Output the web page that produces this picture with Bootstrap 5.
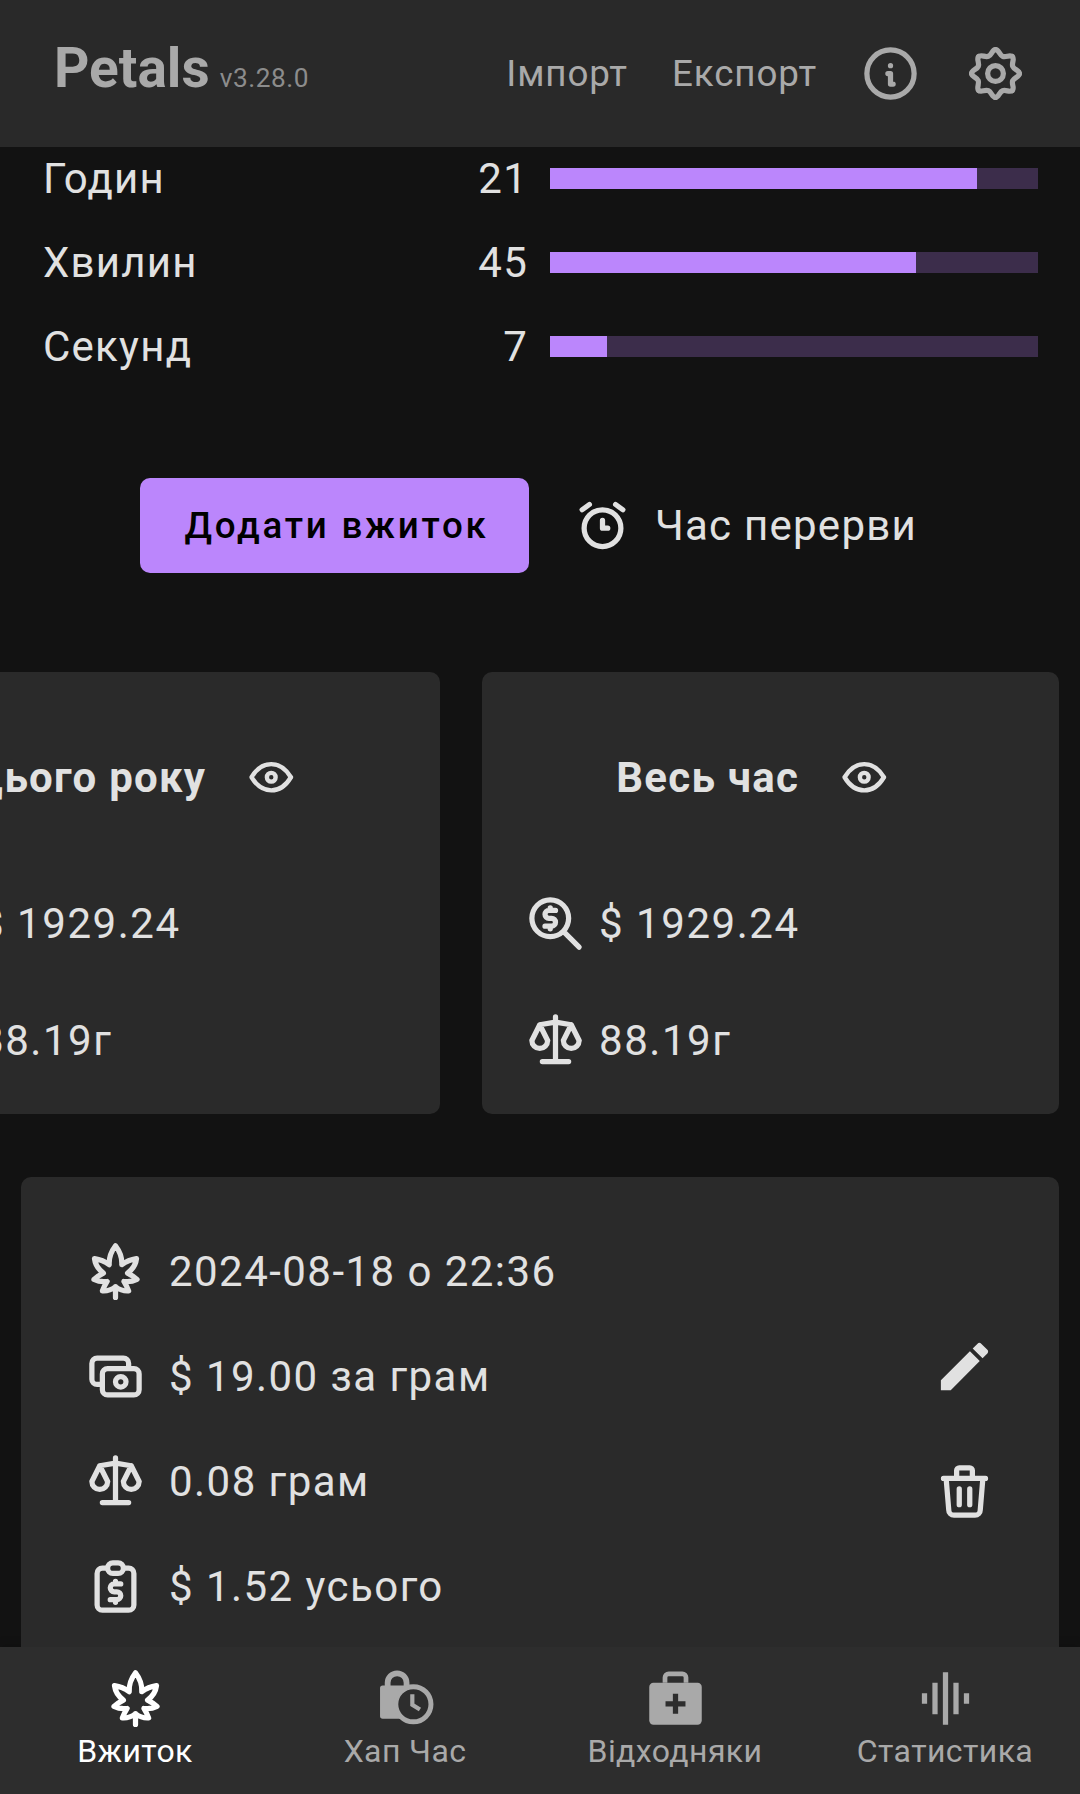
<!DOCTYPE html>
<html lang="uk">
<head>
<meta charset="utf-8">
<title>Petals</title>
<link href="https://cdn.jsdelivr.net/npm/bootstrap@5.3.0/dist/css/bootstrap.min.css" rel="stylesheet">
<style>
html,body{height:1794px;margin:0;background:#121212;}
body{font-family:Roboto,"Liberation Sans",sans-serif;color:#e1e1e1;overflow:hidden;}
.ico{width:63px;height:63px;flex:none;fill:none;stroke:currentColor;stroke-width:2;stroke-linecap:round;stroke-linejoin:round;}
.ico-eye{width:52.5px;height:52.5px;}
.topbar{height:147px;background:#292929;padding:0 53px 0 54px;color:#a9a9a9;flex:none;align-items:flex-start;flex-wrap:nowrap;}
.brand{font-size:55px;font-weight:700;line-height:1;margin-top:41px;color:#a9a9a9;padding:0;}
.brand-ver{font-size:26.25px;font-weight:400;letter-spacing:.55px;color:#8c8c8c;margin-left:10px;}
.toplink{font-size:36.75px;letter-spacing:.9px;color:#a9a9a9;line-height:44px;text-decoration:none;}
.toplink + .toplink{margin-left:44px;}
.topright{margin-top:42px;}
.info-ico{margin-left:42px;margin-right:42px;}
.pagebody{flex:1 1 0;min-height:0;overflow:hidden;}
.timer{margin-top:-10.5px;}
.trow{height:84px;padding:0 42px 0 43px;font-size:42px;letter-spacing:1.25px;}
.tnum{margin-left:auto;margin-right:22px;}
.tbar{width:488px;height:21px;border-radius:0;background:#3c2d4b;}
.tfill{background:#bb86fc;}
.actions{margin-top:89.5px;height:95px;}
.addbtn{width:389px;height:95px;border:0;border-radius:10px;background:#bb86fc;color:#000;font-size:36.75px;font-weight:500;letter-spacing:2.75px;padding:0 0 0 4px;}
.addbtn:hover{background:#bb86fc;color:#000;}
.breakbtn{border:0;color:#e1e1e1;font-size:42px;letter-spacing:1.25px;padding:0;margin-left:42px;margin-right:23px;gap:21px;}
.statwrap{margin:99px 0 0 -137px;gap:42px;}
.statcard{width:577px;height:442px;flex:none;background:#2a2a2a;border:0;border-radius:10px;color:#e1e1e1;}
.stathead{height:52.5px;margin-top:79px;padding-right:34px;font-size:42px;font-weight:700;letter-spacing:1.25px;gap:39px;white-space:nowrap;}
.statrow{height:116.5px;padding-left:42px;font-size:42px;letter-spacing:1.55px;gap:12px;}
.stathead + .statrow{margin-top:62px;}
.logcard{margin:63px 21px 0;background:#2a2a2a;border:0;border-radius:10px;padding:41.5px 63px;}
.logrow{height:105px;gap:22px;font-size:42px;letter-spacing:1.45px;color:#e1e1e1;}
.logacts{gap:62px;}
.bottombar{height:147px;background:#2d2d2d;flex:none;box-shadow:0 -4px 8px rgba(0,0,0,.1);}
.tabitem{color:#a9a9a9;font-size:32px;letter-spacing:.4px;line-height:37px;padding-top:20px;text-decoration:none;}
.tabitem span{margin-top:3px;}
.tabitem.on{color:#fff;}
.ico-solid{fill:currentColor;stroke:none;}
</style>
</head>
<body>
<svg width="0" height="0" class="d-block position-absolute">
  <defs>
    <symbol id="i-scale" viewBox="0 0 24 24"><path d="M7 20l10 0M6 6l6 -1l6 1M12 3l0 17M9 12l-3 -6l-3 6a3 3 0 0 0 6 0M21 12l-3 -6l-3 6a3 3 0 0 0 6 0"/></symbol>
    <symbol id="i-eye" viewBox="0 0 24 24"><path d="M10 12a2 2 0 1 0 4 0a2 2 0 0 0 -4 0M21 12c-2.4 4 -5.4 6 -9 6c-3.6 0 -6.6 -2 -9 -6c2.4 -4 5.4 -6 9 -6c3.6 0 6.6 2 9 6"/></symbol>
    <symbol id="i-zoom" viewBox="0 0 24 24"><path d="M3 10a7 7 0 1 0 14 0a7 7 0 1 0 -14 0M21 21l-6 -6M12 7h-2.5a1.5 1.5 0 0 0 0 3h1a1.5 1.5 0 0 1 0 3h-2.5M10 13v1m0 -8v1"/></symbol>
    <symbol id="i-leaf" viewBox="0 0 24 24"><path d="M12 21.9V17.8M12 2.2Q14.6 5.6 14.4 9.4Q16.8 7.6 20 7.1Q19.6 10.4 16.6 12.6Q18.6 13.6 20.2 15Q17.8 16.2 15.2 15.8Q16.2 17.4 17 19.4Q14.4 19.6 12 17.8Q9.6 19.6 7 19.4Q7.8 17.4 8.8 15.8Q6.2 16.2 3.8 15Q5.4 13.6 7.4 12.6Q4.4 10.4 4 7.1Q7.2 7.6 9.6 9.4Q9.4 5.6 12 2.2Z"/></symbol>
    <path id="gearseg" d="M12 2.9C13.3 2.9 13.5 4.9 14.72 5.44C16 6 17.5 4.65 18.43 5.57"/>
  </defs>
</svg>

<div class="d-flex flex-column vh-100 overflow-hidden">
  <header class="navbar topbar d-flex justify-content-between">
    <a class="navbar-brand brand" href="#">Petals<span class="brand-ver">v3.28.0</span></a>
    <div class="d-flex align-items-center topright">
      <a class="toplink" href="#">Імпорт</a>
      <a class="toplink" href="#">Експорт</a>
      <svg class="ico info-ico" viewBox="0 0 24 24"><path d="M3 12a9 9 0 1 0 18 0a9 9 0 0 0 -18 0M12 9h.01M11 12h1v4h1"/></svg>
      <svg class="ico" viewBox="0 0 24 24">
        <use href="#gearseg"/><use href="#gearseg" transform="rotate(45 12 12)"/><use href="#gearseg" transform="rotate(90 12 12)"/><use href="#gearseg" transform="rotate(135 12 12)"/><use href="#gearseg" transform="rotate(180 12 12)"/><use href="#gearseg" transform="rotate(225 12 12)"/><use href="#gearseg" transform="rotate(270 12 12)"/><use href="#gearseg" transform="rotate(315 12 12)"/>
        <circle cx="12" cy="12" r="3"/>
      </svg>
    </div>
  </header>

  <main class="pagebody">
    <section class="timer">
      <div class="trow d-flex align-items-center"><span>Годин</span><span class="tnum">21</span><div class="progress tbar"><div class="progress-bar tfill" style="width:87.5%"></div></div></div>
      <div class="trow d-flex align-items-center"><span>Хвилин</span><span class="tnum">45</span><div class="progress tbar"><div class="progress-bar tfill" style="width:75%"></div></div></div>
      <div class="trow d-flex align-items-center"><span>Секунд</span><span class="tnum">7</span><div class="progress tbar"><div class="progress-bar tfill" style="width:11.67%"></div></div></div>
    </section>

    <section class="actions d-flex justify-content-center align-items-center">
      <button class="btn addbtn" type="button">Додати вжиток</button>
      <button class="btn breakbtn d-flex align-items-center" type="button">
        <svg class="ico" viewBox="0 0 24 24"><path d="M5 13a7 7 0 1 0 14 0a7 7 0 1 0 -14 0M12 10l0 3l2 0M7 4l-2.75 2M17 4l2.75 2"/></svg>
        Час перерви
      </button>
    </section>

    <section class="statwrap d-flex">
      <div class="card statcard">
        <div class="stathead d-flex align-items-center justify-content-center"><span>Цього року</span><svg class="ico ico-eye"><use href="#i-eye"/></svg></div>
        <div class="statrow d-flex align-items-center"><svg class="ico"><use href="#i-zoom"/></svg><span>$ 1929.24</span></div>
        <div class="statrow d-flex align-items-center"><svg class="ico"><use href="#i-scale"/></svg><span>88.19г</span></div>
      </div>
      <div class="card statcard">
        <div class="stathead d-flex align-items-center justify-content-center"><span>Весь час</span><svg class="ico ico-eye"><use href="#i-eye"/></svg></div>
        <div class="statrow d-flex align-items-center"><svg class="ico"><use href="#i-zoom"/></svg><span>$ 1929.24</span></div>
        <div class="statrow d-flex align-items-center"><svg class="ico"><use href="#i-scale"/></svg><span>88.19г</span></div>
      </div>
    </section>

    <section class="card logcard d-flex flex-row justify-content-between align-items-center">
      <div>
        <div class="logrow d-flex align-items-center"><svg class="ico"><use href="#i-leaf"/></svg><span>2024-08-18 о 22:36</span></div>
        <div class="logrow d-flex align-items-center"><svg class="ico" viewBox="0 0 24 24"><path d="M7 11a2 2 0 0 1 2 -2h10a2 2 0 0 1 2 2v6a2 2 0 0 1 -2 2h-10a2 2 0 0 1 -2 -2zM12 14a2 2 0 1 0 4 0a2 2 0 1 0 -4 0M17 9v-2a2 2 0 0 0 -2 -2h-10a2 2 0 0 0 -2 2v6a2 2 0 0 0 2 2h2"/></svg><span>$ 19.00 за грам</span></div>
        <div class="logrow d-flex align-items-center"><svg class="ico"><use href="#i-scale"/></svg><span>0.08 грам</span></div>
        <div class="logrow d-flex align-items-center"><svg class="ico" viewBox="0 0 24 24"><path d="M9 5h-2a2 2 0 0 0 -2 2v12a2 2 0 0 0 2 2h10a2 2 0 0 0 2 -2v-12a2 2 0 0 0 -2 -2h-2M9 5a2 2 0 0 1 2 -2h2a2 2 0 0 1 2 2v0a2 2 0 0 1 -2 2h-2a2 2 0 0 1 -2 -2zM14 11h-2.5a1.5 1.5 0 0 0 0 3h1a1.5 1.5 0 0 1 0 3h-2.5M12 17v1m0 -8v1"/></svg><span>$ 1.52 усього</span></div>
      </div>
      <div class="logacts d-flex flex-column">
        <svg class="ico ico-solid" viewBox="0 0 24 24"><path d="M3 17.25V21h3.75L17.81 9.94l-3.75-3.75L3 17.25zM20.71 7.04c.39-.39.39-1.02 0-1.41l-2.34-2.34c-.39-.39-1.02-.39-1.41 0l-1.83 1.83 3.75 3.75 1.83-1.83z"/></svg>
        <svg class="ico" viewBox="0 0 24 24"><path d="M4 7l16 0M10 11l0 6M14 11l0 6M5 7l1 12a2 2 0 0 0 2 2h8a2 2 0 0 0 2 -2l1 -12M9 7v-3a1 1 0 0 1 1 -1h4a1 1 0 0 1 1 1v3"/></svg>
      </div>
    </section>
  </main>

  <nav class="bottombar row g-0">
    <a class="col-3 tabitem on d-flex flex-column align-items-center" href="#"><svg class="ico"><use href="#i-leaf"/></svg><span>Вжиток</span></a>
    <a class="col-3 tabitem d-flex flex-column align-items-center" href="#">
      <svg class="ico" viewBox="0 0 24 24">
        <path class="ico-solid" d="M3.3 7h13v12.7h-13a1 1 0 0 1 -1 -1v-10.7a1 1 0 0 1 1 -1z"/>
        <path stroke-width="2.2" stroke-linecap="butt" d="M5.2 7.4V6a3.6 3.6 0 0 1 7.2 0v1.4"/>
        <circle cx="15" cy="14.2" r="6.7" fill="#2d2d2d" stroke-width="1.9"/>
        <path stroke-width="1.6" stroke-linecap="butt" stroke-linejoin="miter" d="M14.6 10.4v4l2.9 1.8"/>
      </svg><span>Хап Час</span></a>
    <a class="col-3 tabitem d-flex flex-column align-items-center" href="#">
      <svg class="ico" viewBox="0 0 24 24">
        <rect class="ico-solid" x="2" y="6" width="20" height="16" rx="1.6"/>
        <path stroke-width="1.8" stroke-linecap="butt" d="M8 6V4a1.4 1.4 0 0 1 1.4 -1.4h5.2a1.4 1.4 0 0 1 1.4 1.4v2"/>
        <path stroke="#2d2d2d" stroke-width="2" stroke-linecap="butt" d="M12 10.2v7.6M8.2 14h7.6"/>
      </svg><span>Відходняки</span></a>
    <a class="col-3 tabitem d-flex flex-column align-items-center" href="#">
      <svg class="ico ico-solid" viewBox="0 0 24 24"><path d="M7 18h2V6H7v12zm4 4h2V2h-2v20zm-8-8h2v-4H3v4zm12 4h2V6h-2v12zm4-8v4h2v-4h-2z"/></svg><span>Статистика</span></a>
  </nav>
</div>
<script src="https://cdn.jsdelivr.net/npm/bootstrap@5.3.0/dist/js/bootstrap.bundle.min.js"></script>
</body>
</html>
